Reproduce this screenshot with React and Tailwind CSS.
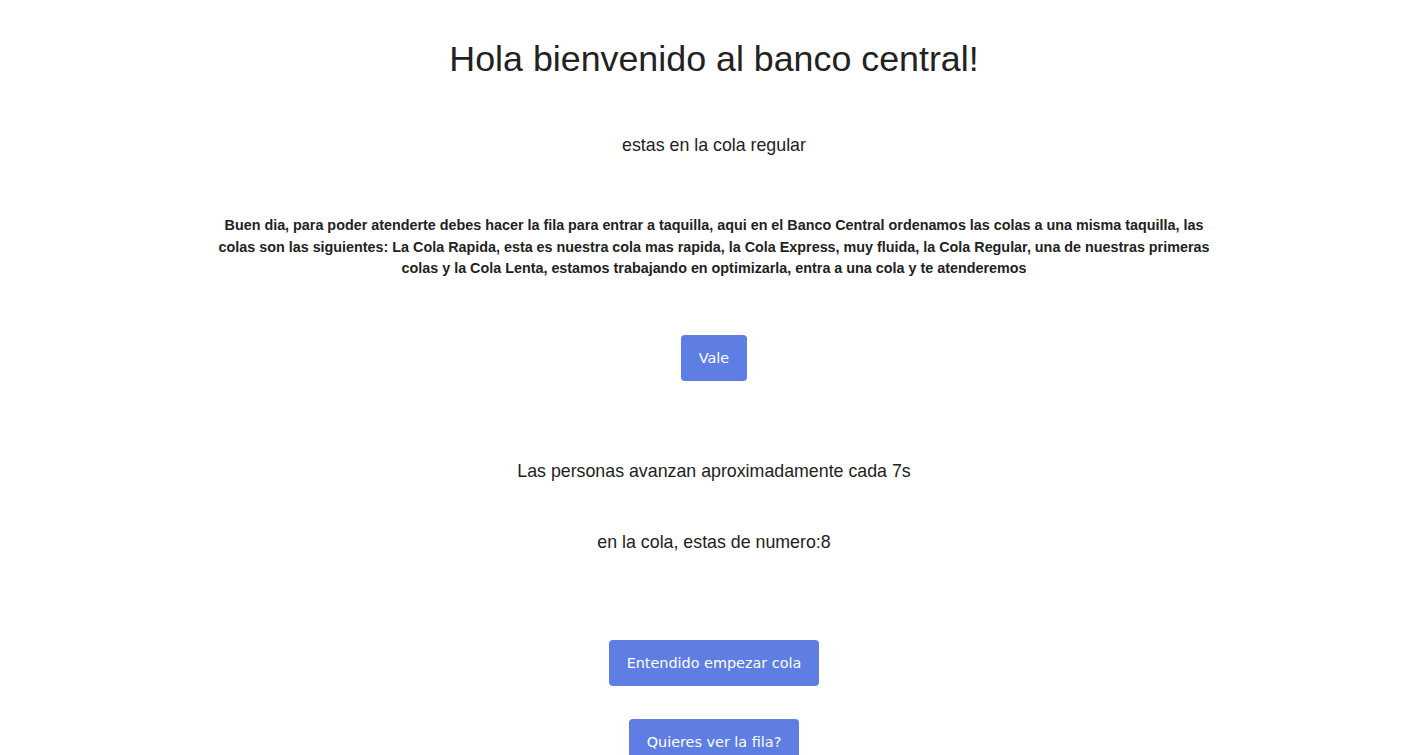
export default function App() {
  const btn =
    "h-[46px] px-[18px] rounded-[4px] bg-[#5e7ee3] text-white text-[14.4px] font-['DejaVu_Sans',sans-serif] leading-none pt-[2px]";

  return (
    <div className="min-h-screen bg-white text-[#222] font-['Liberation_Sans',Arial,sans-serif] flex flex-col items-center pt-[38px] pl-[6px] pb-10 text-center">
      <h1 className="text-[35.8px] leading-[43px] font-normal">Hola bienvenido al banco central!</h1>

      <p className="mt-[51px] text-[17.8px] leading-[27px]">estas en la cola regular</p>

      <p className="mt-[56px] max-w-[998px] text-[14.35px] leading-[21.5px] font-bold">
        Buen dia, para poder atenderte debes hacer la fila para entrar a taquilla, aqui en el Banco Central ordenamos
        las colas a una misma taquilla, las colas son las siguientes: La Cola Rapida, esta es nuestra cola mas rapida,
        la Cola Express, muy fluida, la Cola Regular, una de nuestras primeras colas y la Cola Lenta, estamos trabajando
        en optimizarla, entra a una cola y te atenderemos
      </p>

      <button className={`mt-[55px] ${btn}`}>Vale</button>

      <p className="mt-[77px] text-[17.8px] leading-[27px]">Las personas avanzan aproximadamente cada 7s</p>

      <p className="mt-[44px] text-[17.8px] leading-[27px]">en la cola, estas de numero:8</p>

      <button className={`mt-[84px] ${btn}`}>Entendido empezar cola</button>

      <button className={`mt-[33px] ${btn}`}>Quieres ver la fila?</button>
    </div>
  );
}
